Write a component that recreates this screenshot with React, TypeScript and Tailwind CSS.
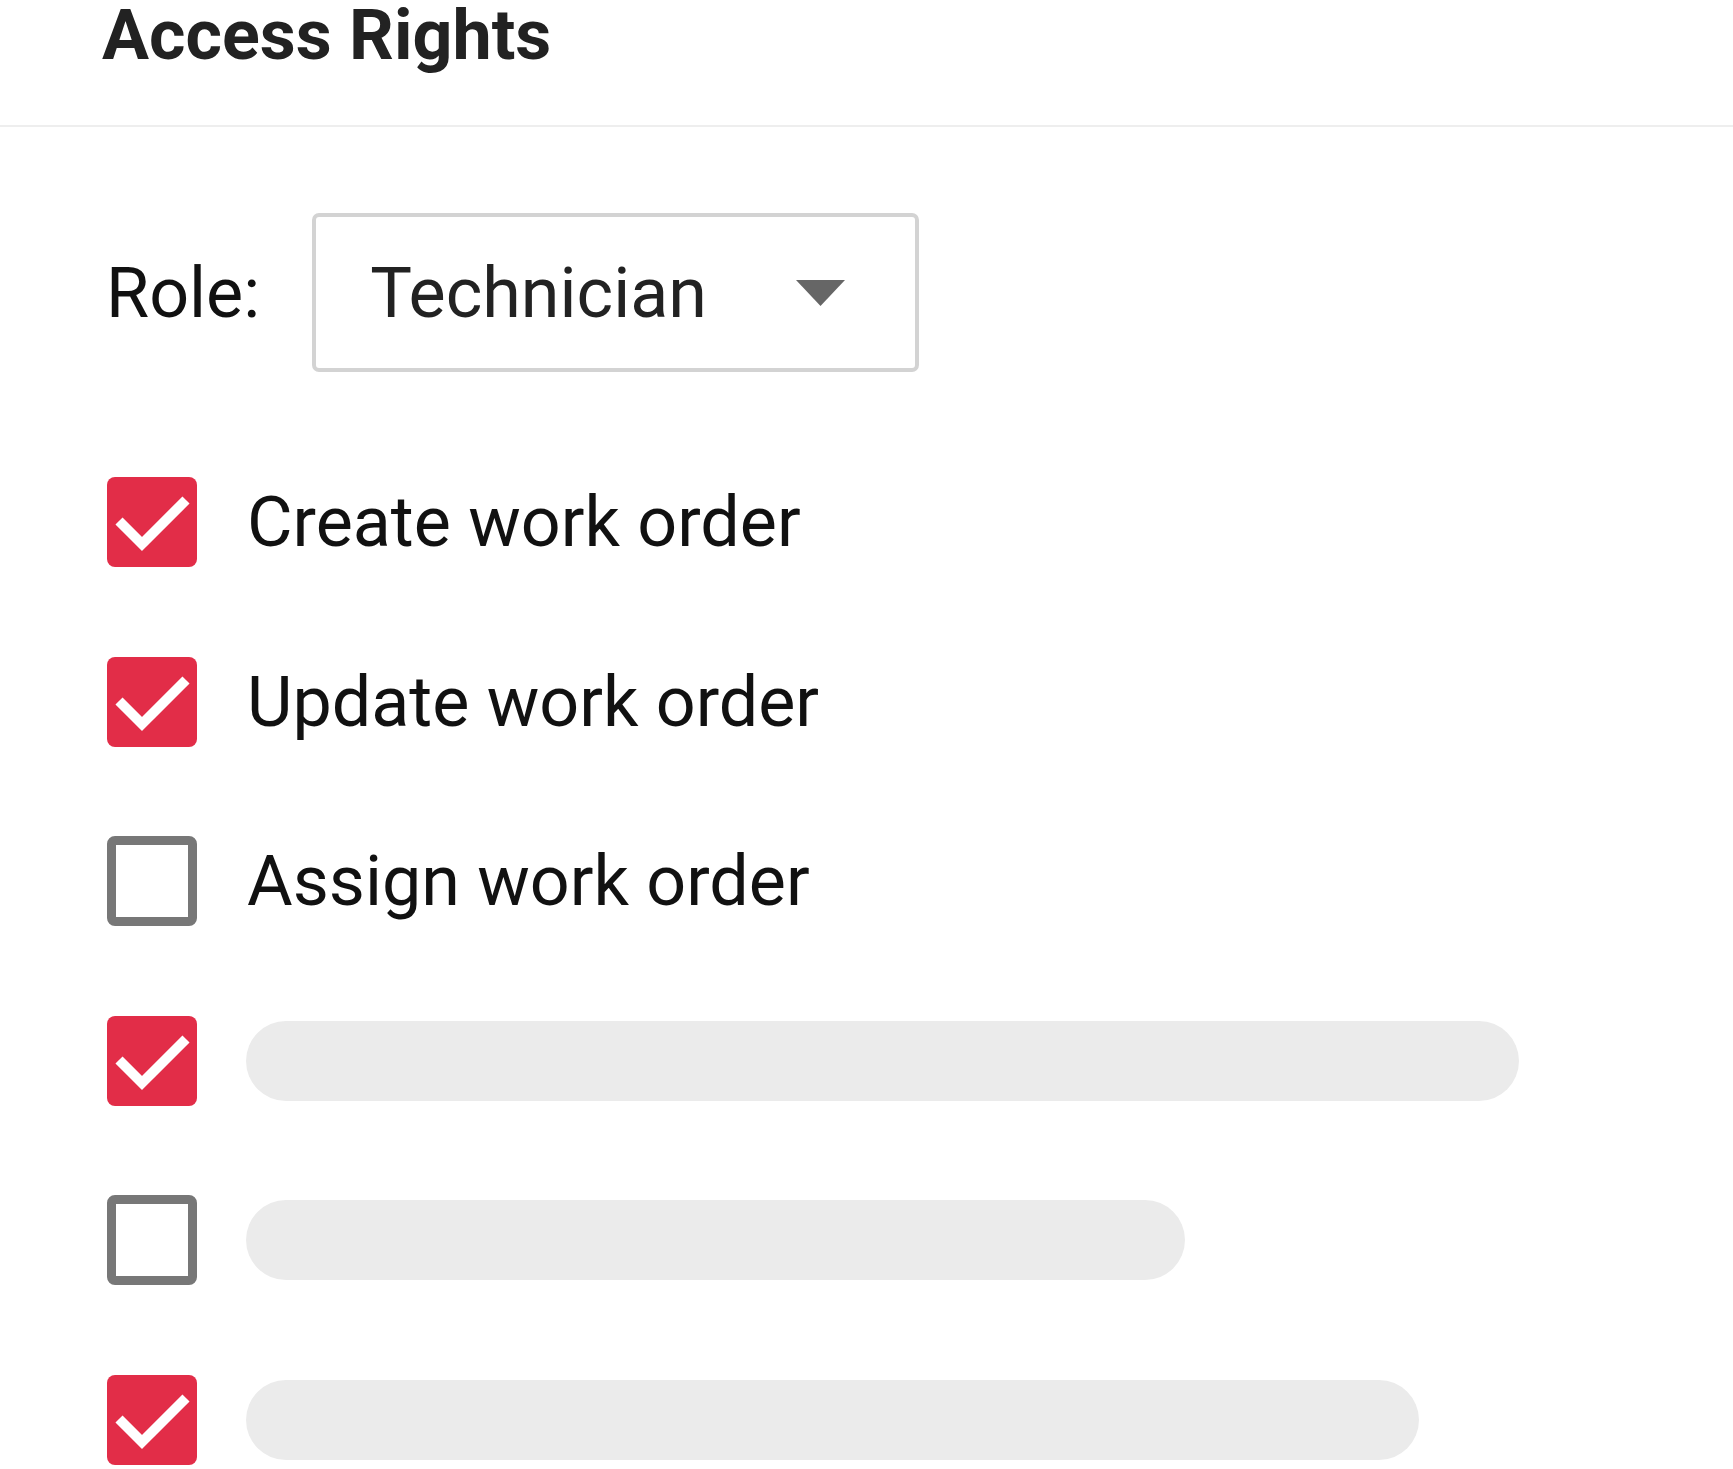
import React from "react";

const rows = [
  { checked: true, label: "Create work order" },
  { checked: true, label: "Update work order" },
  { checked: false, label: "Assign work order" },
  { checked: true, bar: "w-[1273px]" },
  { checked: false, bar: "w-[939px]" },
  { checked: true, bar: "w-[1173px]" },
];

const Checkbox = ({ checked }: { checked: boolean }) =>
  checked ? (
    <div className="w-[90px] h-[90px] shrink-0 rounded-[8px] bg-[#e22d48]">
      <svg viewBox="0 0 90 90" width="90" height="90">
        <polyline
          points="12,44 35,67 79,23"
          fill="none"
          stroke="#ffffff"
          strokeWidth="10"
        />
      </svg>
    </div>
  ) : (
    <div className="w-[90px] h-[90px] shrink-0 rounded-[8px] border-[9px] border-[#777777] bg-white" />
  );

const App = () => {
  return (
    <div
      className="w-[1733px] min-h-[1469px] bg-white overflow-hidden"
      style={{ fontFamily: "Roboto, 'Liberation Sans', sans-serif" }}
    >
      <div className="h-[127px] border-b-2 border-[#eeeeee] pl-[102px]">
        <h1 className="text-[70px] leading-[70px] font-bold text-[#222222]">
          Access Rights
        </h1>
      </div>

      <div className="pl-[101px] pt-[86px]">
        <div className="flex items-center pl-[5px]">
          <span className="text-[70px] leading-none text-[#111111]">Role:</span>
          <div className="ml-[52px] w-[607px] h-[159px] flex items-center pl-[54px] border-[4px] border-[#d3d3d3] rounded-[7px]">
            <span className="text-[70px] leading-none text-[#222222]">Technician</span>
            <svg
              className="ml-auto mr-[70px]"
              width="49"
              height="26"
              viewBox="0 0 49 26"
            >
              <polygon points="0,0 49,0 24.5,26" fill="#666666" />
            </svg>
          </div>
        </div>

        <div className="mt-[105px] flex flex-col gap-[89.5px] pl-[6px]">
          {rows.map((r, i) => (
            <div key={i} className="flex items-center h-[90px]">
              <Checkbox checked={r.checked} />
              {r.label ? (
                <span className="ml-[50px] text-[70px] leading-none text-[#111111] whitespace-nowrap">
                  {r.label}
                </span>
              ) : (
                <div className={`ml-[49px] h-[80px] rounded-full bg-[#ebebeb] ${r.bar}`} />
              )}
            </div>
          ))}
        </div>
      </div>
    </div>
  );
};

export default App;
